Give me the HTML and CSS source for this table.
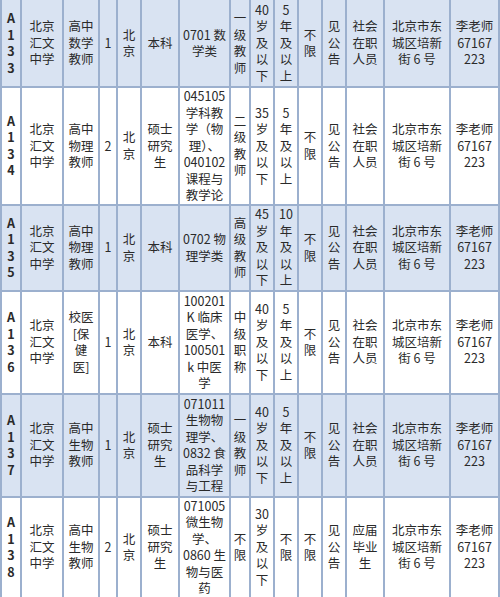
FILE: index.html
```html
<!DOCTYPE html>
<html lang="zh-CN">
<head>
<meta charset="utf-8">
<title>北京汇文中学 招聘岗位</title>
<link rel="stylesheet" href="styles.css">
</head>
<body>
<table class="jobs">
  <colgroup>
    <col class="w20"><col class="w42"><col class="w36"><col class="w18"><col class="w24"><col class="w38"><col class="w51"><col class="w20"><col class="w24"><col class="w24"><col class="w24"><col class="w24"><col class="w38"><col class="w66"><col class="w49">
  </colgroup>
  <tbody>
    <tr class="alt r1">
      <td class="id">A<br>1<br>3<br>3</td>
      <td>北京<br>汇文<br>中学</td>
      <td>高中<br>数学<br>教师</td>
      <td>1</td>
      <td>北<br>京</td>
      <td>本科</td>
      <td>0701 数<br>学类</td>
      <td>一<br>级<br>教<br>师</td>
      <td>40<br>岁<br>及<br>以<br>下</td>
      <td>5<br>年<br>及<br>以<br>上</td>
      <td>不<br>限</td>
      <td>见<br>公<br>告</td>
      <td>社会<br>在职<br>人员</td>
      <td>北京市东<br>城区培新<br>街 6 号</td>
      <td>李老师<br>67167<br>223</td>
    </tr>
    <tr class="r2">
      <td class="id">A<br>1<br>3<br>4</td>
      <td>北京<br>汇文<br>中学</td>
      <td>高中<br>物理<br>教师</td>
      <td>2</td>
      <td>北<br>京</td>
      <td>硕士<br>研究<br>生</td>
      <td>045105<br>学科教<br>学（物<br>理）、<br>040102<br>课程与<br>教学论</td>
      <td>二<br>级<br>教<br>师</td>
      <td>35<br>岁<br>及<br>以<br>下</td>
      <td>5<br>年<br>及<br>以<br>上</td>
      <td>不<br>限</td>
      <td>见<br>公<br>告</td>
      <td>社会<br>在职<br>人员</td>
      <td>北京市东<br>城区培新<br>街 6 号</td>
      <td>李老师<br>67167<br>223</td>
    </tr>
    <tr class="alt r3">
      <td class="id">A<br>1<br>3<br>5</td>
      <td>北京<br>汇文<br>中学</td>
      <td>高中<br>物理<br>教师</td>
      <td>1</td>
      <td>北<br>京</td>
      <td>本科</td>
      <td>0702 物<br>理学类</td>
      <td>高<br>级<br>教<br>师</td>
      <td>45<br>岁<br>及<br>以<br>下</td>
      <td>10<br>年<br>及<br>以<br>上</td>
      <td>不<br>限</td>
      <td>见<br>公<br>告</td>
      <td>社会<br>在职<br>人员</td>
      <td>北京市东<br>城区培新<br>街 6 号</td>
      <td>李老师<br>67167<br>223</td>
    </tr>
    <tr class="r4">
      <td class="id">A<br>1<br>3<br>6</td>
      <td>北京<br>汇文<br>中学</td>
      <td>校医<br>[保<br>健<br>医]</td>
      <td>1</td>
      <td>北<br>京</td>
      <td>本科</td>
      <td>100201<br>K 临床<br>医学、<br>100501<br>k 中医<br>学</td>
      <td>中<br>级<br>职<br>称</td>
      <td>40<br>岁<br>及<br>以<br>下</td>
      <td>5<br>年<br>及<br>以<br>上</td>
      <td>不<br>限</td>
      <td>见<br>公<br>告</td>
      <td>社会<br>在职<br>人员</td>
      <td>北京市东<br>城区培新<br>街 6 号</td>
      <td>李老师<br>67167<br>223</td>
    </tr>
    <tr class="alt r5">
      <td class="id">A<br>1<br>3<br>7</td>
      <td>北京<br>汇文<br>中学</td>
      <td>高中<br>生物<br>教师</td>
      <td>1</td>
      <td>北<br>京</td>
      <td>硕士<br>研究<br>生</td>
      <td>071011<br>生物物<br>理学、<br>0832 食<br>品科学<br>与工程</td>
      <td>一<br>级<br>教<br>师</td>
      <td>40<br>岁<br>及<br>以<br>下</td>
      <td>5<br>年<br>及<br>以<br>上</td>
      <td>不<br>限</td>
      <td>见<br>公<br>告</td>
      <td>社会<br>在职<br>人员</td>
      <td>北京市东<br>城区培新<br>街 6 号</td>
      <td>李老师<br>67167<br>223</td>
    </tr>
    <tr class="r6">
      <td class="id">A<br>1<br>3<br>8</td>
      <td>北京<br>汇文<br>中学</td>
      <td>高中<br>生物<br>教师</td>
      <td>2</td>
      <td>北<br>京</td>
      <td>硕士<br>研究<br>生</td>
      <td>071005<br>微生物<br>学、<br>0860 生<br>物与医<br>药</td>
      <td>不<br>限</td>
      <td>30<br>岁<br>及<br>以<br>下</td>
      <td>不<br>限</td>
      <td>不<br>限</td>
      <td>见<br>公<br>告</td>
      <td>应届<br>毕业<br>生</td>
      <td>北京市东<br>城区培新<br>街 6 号</td>
      <td>李老师<br>67167<br>223</td>
    </tr>
  </tbody>
</table>
</body>
</html>
```

FILE: styles.css
```css
html, body {
  margin: 0;
  padding: 0;
  background: #ffffff;
}

.jobs {
  border-collapse: collapse;
  table-layout: fixed;
  width: 499px;
  font-family: "Noto Sans CJK SC", "Noto Sans", sans-serif;
  font-size: 12.5px;
  line-height: 16.5px;
  color: #2a2a2a;
}

.jobs td {
  border: 2px solid #9cb0ce;
  padding: 0;
  text-align: center;
  vertical-align: middle;
  white-space: nowrap;
  overflow: hidden;
}

.jobs tr:first-child td {
  border-top: 0;
}

.jobs tr.alt td {
  background: #d9e3f2;
}

.jobs td.id {
  font-weight: 700;
}

.w18 { width: 18px; }
.w20 { width: 20px; }
.w24 { width: 24px; }
.w36 { width: 36px; }
.w38 { width: 38px; }
.w42 { width: 42px; }
.w49 { width: 49px; }
.w51 { width: 51px; }
.w66 { width: 66px; }

.r1 { height: 87px; }
.r2 { height: 116px; }
.r3 { height: 86px; }
.r4 { height: 103px; }
.r5 { height: 103px; }
.r6 { height: 100px; }
```
